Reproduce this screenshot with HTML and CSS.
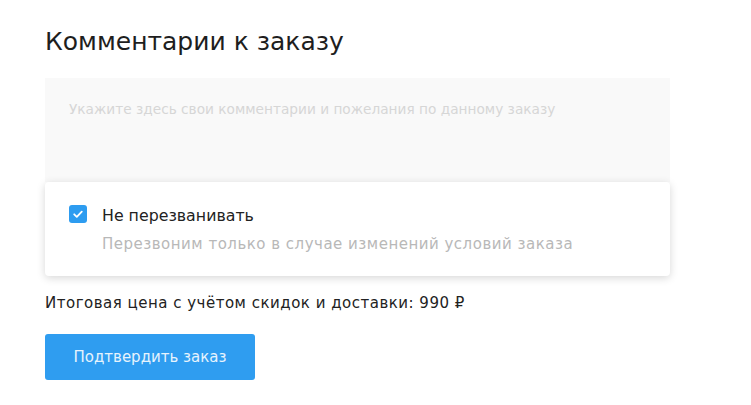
FILE: index.html
```html
<!DOCTYPE html>
<html lang="ru">
<head>
<meta charset="utf-8">
<link rel="stylesheet" href="styles.css">
</head>
<body>
<main class="page">
  <h1 class="title">Комментарии к заказу</h1>
  <div class="comment-block">
    <div class="textarea">Укажите здесь свои комментарии и пожелания по данному заказу</div>
    <div class="card">
      <label class="check-row">
        <span class="checkbox">
          <svg viewBox="0 0 18 18" width="18" height="18"><path d="M5.2 9.3l2.6 2.5 5-5.2" fill="none" stroke="#fff" stroke-width="1.8" stroke-linecap="round" stroke-linejoin="round"/></svg>
        </span>
        <span class="check-text">
          <span class="check-label">Не перезванивать</span>
          <span class="check-hint">Перезвоним только в случае изменений условий заказа</span>
        </span>
      </label>
    </div>
  </div>
  <p class="total">Итоговая цена с учётом скидок и доставки: 990 ₽</p>
  <button class="submit">Подтвердить заказ</button>
</main>
</body>
</html>
```
FILE: styles.css
```css
html, body {
  margin: 0;
  padding: 0;
  background: #fff;
}
body {
  font-family: "DejaVu Sans", "Noto Sans", sans-serif;
  color: #222;
}
.page {
  padding: 24px 0 0 45px;
  width: 625px;
}
.title {
  margin: 0;
  font-size: 25px;
  font-weight: 400;
  line-height: 36px;
  color: #1e1e1e;
}
.comment-block {
  margin-top: 18px;
  display: flex;
  flex-direction: column;
}
.textarea {
  background: #f9f9f9;
  height: 104px;
  box-sizing: border-box;
  padding: 21px 24px 20px;
  font-size: 13.7px;
  line-height: 20px;
  color: #d6d6d6;
}
.card {
  background: #fff;
  border-radius: 4px;
  box-shadow: 0 2px 8px rgba(0, 0, 0, 0.16);
  height: 94px;
  box-sizing: border-box;
  padding: 23px 24px;
}
.check-row {
  display: flex;
  align-items: flex-start;
  gap: 15px;
}
.checkbox {
  width: 18px;
  height: 18px;
  border-radius: 3px;
  background: #2d9cf0;
  flex: none;
  margin-top: 0;
  display: flex;
}
.check-text {
  display: flex;
  flex-direction: column;
  margin-top: 1px;
}
.check-label {
  font-size: 15.8px;
  line-height: 20px;
  color: #222;
}
.check-hint {
  margin-top: 8px;
  font-size: 15px;
  line-height: 20px;
  letter-spacing: 0.5px;
  color: #b8b8b8;
}
.total {
  margin: 16px 0 0;
  font-size: 15px;
  line-height: 22px;
  letter-spacing: 0.5px;
  color: #222;
}
.submit {
  margin-top: 20px;
  width: 210px;
  height: 46px;
  border: none;
  border-radius: 3px;
  background: #2f9df0;
  color: #e6f3fd;
  font-family: inherit;
  font-size: 15px;
}
```
